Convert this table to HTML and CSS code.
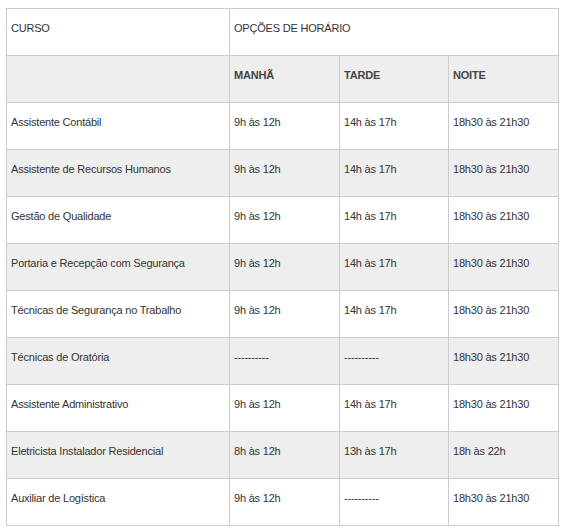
FILE: index.html
```html
<!DOCTYPE html>
<html lang="pt">
<head>
<meta charset="utf-8">
<link rel="stylesheet" href="styles.css">
</head>
<body>
<table class="schedule">
  <colgroup>
    <col class="c-curso">
    <col class="c-m">
    <col class="c-t">
    <col class="c-n">
  </colgroup>
  <tr>
    <td class="head">CURSO</td>
    <td class="head" colspan="3">OPÇÕES DE HORÁRIO</td>
  </tr>
  <tr class="alt">
    <td></td>
    <td class="sub">MANHÃ</td>
    <td class="sub">TARDE</td>
    <td class="sub">NOITE</td>
  </tr>
  <tr>
    <td>Assistente Contábil</td><td>9h às 12h</td><td>14h às 17h</td><td>18h30 às 21h30</td>
  </tr>
  <tr class="alt">
    <td>Assistente de Recursos Humanos</td><td>9h às 12h</td><td>14h às 17h</td><td>18h30 às 21h30</td>
  </tr>
  <tr>
    <td>Gestão de Qualidade</td><td>9h às 12h</td><td>14h às 17h</td><td>18h30 às 21h30</td>
  </tr>
  <tr class="alt">
    <td>Portaria e Recepção com Segurança</td><td>9h às 12h</td><td>14h às 17h</td><td>18h30 às 21h30</td>
  </tr>
  <tr>
    <td>Técnicas de Segurança no Trabalho</td><td>9h às 12h</td><td>14h às 17h</td><td>18h30 às 21h30</td>
  </tr>
  <tr class="alt">
    <td>Técnicas de Oratória</td><td>----------</td><td>----------</td><td>18h30 às 21h30</td>
  </tr>
  <tr>
    <td>Assistente Administrativo</td><td>9h às 12h</td><td>14h às 17h</td><td>18h30 às 21h30</td>
  </tr>
  <tr class="alt">
    <td>Eletricista Instalador Residencial</td><td>8h às 12h</td><td>13h às 17h</td><td>18h às 22h</td>
  </tr>
  <tr>
    <td>Auxiliar de Logística</td><td>9h às 12h</td><td>----------</td><td>18h30 às 21h30</td>
  </tr>
</table>
</body>
</html>
```
FILE: styles.css
```css
html, body {
  margin: 0;
  padding: 0;
  background: #fff;
}
body {
  padding: 8px 0 0 6px;
  font-family: "Liberation Sans", Arial, sans-serif;
  font-size: 11px;
  letter-spacing: -0.2px;
  color: #333;
}
.schedule {
  border-collapse: collapse;
  table-layout: fixed;
  width: 552px;
}
.c-curso { width: 223px; }
.c-m { width: 110px; }
.c-t { width: 109px; }
.c-n { width: 110px; }
.schedule td {
  border: 1px solid #ccc;
  height: 47px;
  box-sizing: border-box;
  padding: 11px 4px 0 4px;
  vertical-align: top;
  line-height: 17px;
}
.schedule tr.alt td {
  background: #eee;
}
.schedule td.sub {
  font-weight: bold;
  color: #444;
}
```
